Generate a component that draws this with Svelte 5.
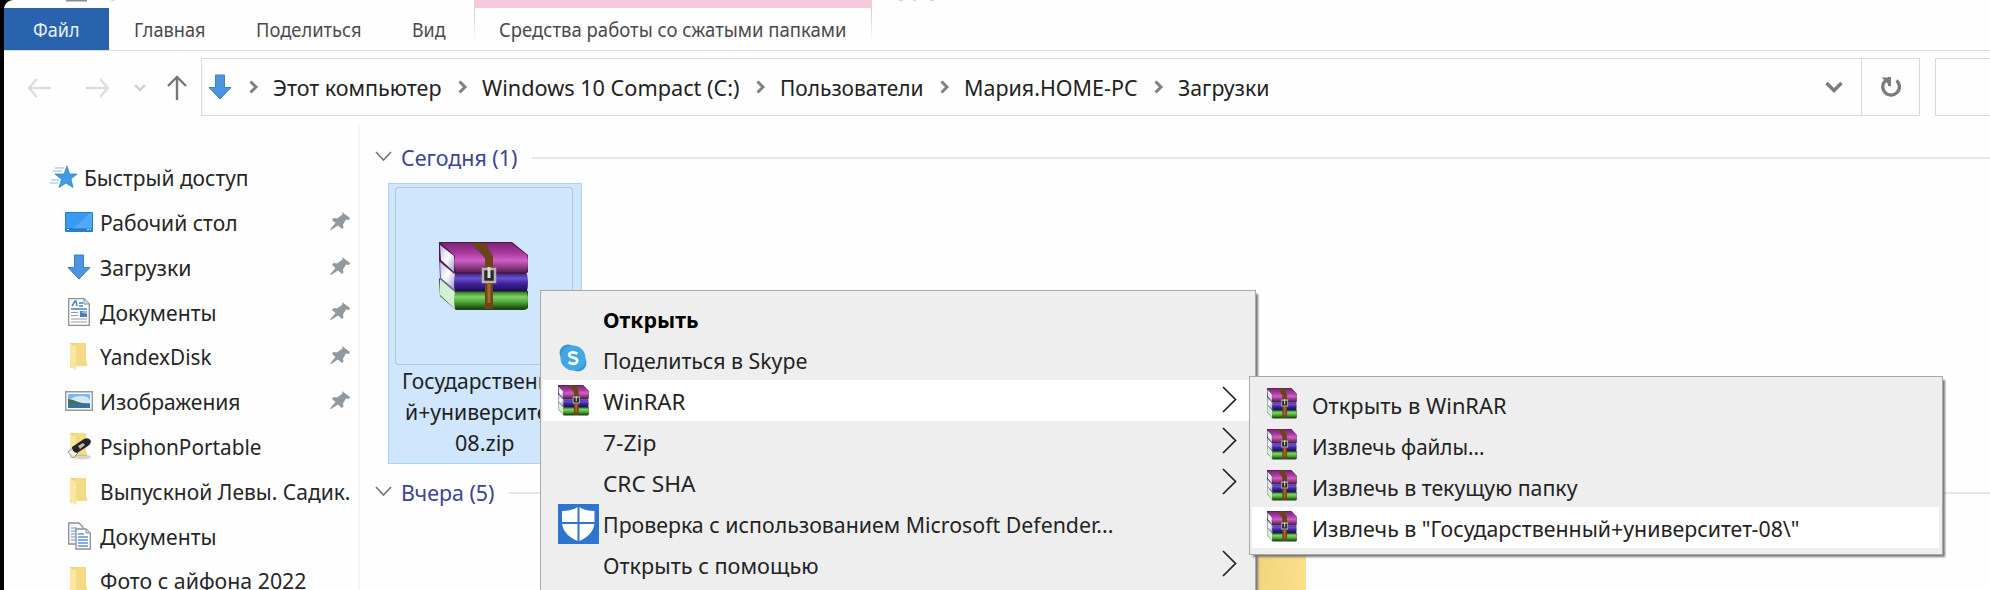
<script>
  const tabs = [
    { label: 'Главная', w: 70 },
    { label: 'Поделиться', w: 104 },
    { label: 'Вид', w: 32 }
  ];
  const crumbs = [
    { label: 'Этот компьютер', w: 167 },
    { label: 'Windows 10 Compact (C:)', w: 256 },
    { label: 'Пользователи', w: 142 },
    { label: 'Мария.HOME-PC', w: 172 },
    { label: 'Загрузки', w: 90 }
  ];
  const places = [
    { label: 'Рабочий стол', w: 136, icon: 'desktop', pin: true },
    { label: 'Загрузки', w: 90, icon: 'down', pin: true },
    { label: 'Документы', w: 115, icon: 'doc', pin: true },
    { label: 'YandexDisk', w: 110, icon: 'folder', pin: true },
    { label: 'Изображения', w: 139, icon: 'image', pin: true },
    { label: 'PsiphonPortable', w: 160, icon: 'usb' },
    { label: 'Выпускной Левы. Садик.', w: 249, icon: 'folder' },
    { label: 'Документы', w: 115, icon: 'docs' },
    { label: 'Фото с айфона 2022', w: 205, icon: 'folder' }
  ];
  const menu = [
    { label: 'Открыть', w: 94, bold: true },
    { label: 'Поделиться в Skype', w: 203, icon: 'skype' },
    { label: 'WinRAR', w: 81, icon: 'rar', sub: true, active: true },
    { label: '7-Zip', w: 52, sub: true },
    { label: 'CRC SHA', w: 91, sub: true },
    { label: 'Проверка с использованием Microsoft Defender...', w: 509, icon: 'defender' },
    { label: 'Открыть с помощью', w: 214, sub: true }
  ];
  const submenu = [
    { label: 'Открыть в WinRAR', w: 193 },
    { label: 'Извлечь файлы...', w: 171 },
    { label: 'Извлечь в текущую папку', w: 264 },
    { label: 'Извлечь в "Государственный+университет-08\\"', w: 486, active: true }
  ];

  // Squeezes a label horizontally so that it fills the given width.
  function fit(node, width) {
    const natural = node.getBoundingClientRect().width;
    if (natural) node.style.transform = `scaleX(${(width + 1.5) / natural})`;
  }
</script>

{#snippet label(text, w)}
  <span class="fit" style:width="{w}px"><span class="fit-in" use:fit={w}>{text}</span></span>
{/snippet}

{#snippet downArrow()}
  <svg width="24" height="26" viewBox="0 0 24 26"><path d="M7.5 1h9v12.5H23L12 25 1 13.500h6.500z" fill="#4a94e0" stroke="#3b7fc9" /></svg>
{/snippet}

{#snippet chevron()}
  <svg width="9" height="14" viewBox="0 0 9 14"><path d="M1.500 1.500 7 7l-5.500 5.500" fill="none" stroke="#808080" stroke-width="3" /></svg>
{/snippet}

{#snippet rar(w, h, strap)}
  <svg width={w} height={h} viewBox="0 0 90 69" preserveAspectRatio="none">
    <defs>
      <linearGradient id="mag" x2="0" y2="1"><stop offset="0" stop-color="#7d2474" /><stop offset=".35" stop-color="#a83a9f" /><stop offset=".6" stop-color="#cf5fc6" /><stop offset="1" stop-color="#5e2157" /></linearGradient>
      <linearGradient id="pur" x2="0" y2="1"><stop offset="0" stop-color="#3e2a9b" /><stop offset=".25" stop-color="#6a52cf" /><stop offset=".55" stop-color="#41259f" /><stop offset="1" stop-color="#1c0d55" /></linearGradient>
      <linearGradient id="grn" x2="0" y2="1"><stop offset="0" stop-color="#347d24" /><stop offset=".3" stop-color="#83d268" /><stop offset=".6" stop-color="#53ad3a" /><stop offset="1" stop-color="#1e4f16" /></linearGradient>
      <linearGradient id="pg" x2="1" y2="1"><stop offset="0" stop-color="#b9bde0" /><stop offset=".5" stop-color="#fff" /><stop offset="1" stop-color="#a9a0cf" /></linearGradient>
    </defs>
    <path d="M0 36 15 49H89v17q-2 2-4 2H17L1 54z" fill="#1f4717" />
    <path d="M1 37 16 50v17L1 53z" fill="#d5efd2" />
    <path d="M16 50H88q2 8 0 16H16q-2-8 0-16z" fill="url(#grn)" />
    <path d="M0 18 15 31l1 19L1 37z" fill="#6b609a" />
    <path d="M1 20 15 32v15L2 36z" fill="url(#pg)" />
    <path d="M16 32H88q2 8 0 17H16q-2-8 0-17z" fill="url(#pur)" />
    <path d="M0 0H73L89 13v17l-2 2H16L0 19z" fill="#4d194b" />
    <path d="M1 3 15 14v16L2 18z" fill="url(#pg)" />
    <path d="M2 1H72L88 13q2 8 0 17H17q-3-9-1-16z" fill="url(#mag)" />
    <path d="M32 1H{38 + strap}L{46 + strap} 14V67H46V16z" fill="#6f431a" />
    <path d="M{46 + strap * 0.3} 42h{strap * 0.4}v19h-{strap * 0.4}z" fill="#a56b2a" />
    <path d="M44 27H{48 + strap}V40H44z" fill="#2a2a2a" stroke="#b5b5ad" stroke-width="2.500" />
    <path d="M{46 + strap / 2} 25v11" stroke="#ddd" stroke-width="3" />
  </svg>
{/snippet}

{#snippet placeIcon(kind)}
  {#if kind === 'desktop'}
    <svg width="28" height="20" viewBox="0 0 28 20"><path d="M.5.500h27v19H.500z" fill="#399af3" stroke="#287bc9" /><path d="M8 17 25 1h2v16z" fill="#52a9f6" /><path d="M1 17.500h26" stroke="#2272bc" stroke-width="2" /><path d="M2 17.500h2m18 0h2m1 0h1" stroke="#d6ebff" /></svg>
  {:else if kind === 'down'}
    {@render downArrow()}
  {:else if kind === 'doc'}
    <svg width="22" height="28" viewBox="0 0 22 28"><path d="M.7.700h15.300L21.300 6v21.300H.700z" fill="#fff" stroke="#8b8f93" stroke-width="1.300" /><path d="M16 1v5h5" fill="#e5e5e5" stroke="#8b8f93" /><path d="m4 8 3-5h1l1 5M11 5h4M11 8h4M3 11h16" stroke="#3585cc" fill="none" stroke-width="1.500" /><path d="M12 13h7v6h-7z" fill="#447fb9" /><path d="m12 14 7-1v3z" fill="#9bc7e9" /><path d="M3 14.500h7m-7 3h7m-7 3.500h16m-16 3h16" stroke="#999" stroke-width="1.200" /></svg>
  {:else if kind === 'image'}
    <svg width="28" height="20" viewBox="0 0 28 20"><path d="M.7.700h26.600v18.600H.700z" fill="#f6f8fa" stroke="#8e9aa8" stroke-width="1.400" /><path d="M3 3h22v14H3z" fill="#80b8ee" /><path d="M5 8q8-5 17-2l3 3v3H3z" fill="#d4e8f5" /><path d="M3 8q4 0 9 2.500t13 2V14H3z" fill="#3c7059" /><path d="M3 13h22v4H3z" fill="#3c6fa6" /></svg>
  {:else if kind === 'docs'}
    <svg width="23" height="28" viewBox="0 0 23 28"><path d="M.7 1h10.300l4 4v17H.700z" fill="#f4f7fc" stroke="#8b8f96" stroke-width="1.300" /><path d="M3 6h6M3 9h8M3 12h8M3 15h8M3 18h8" stroke="#9bb8dc" stroke-width="1.300" /><path d="M8 7h10l4.300 4v16H8z" fill="#fff" stroke="#8b8f96" stroke-width="1.300" /><path d="M18 7v4h4" fill="#ddd" stroke="#8b8f96" /><path d="M10 12h6m-6 3h10m-10 3h10m-10 3h10m-10 3h10" stroke="#5b93dc" stroke-width="1.500" /></svg>
  {:else}
    <svg width="24" height="30" viewBox="0 0 24 30">
      <path d="M3 2h16v20h1v3H8L3 27z" fill="#edcb69" />
      <path d="M7 2h12v19l1 1v3H9z" fill="#f5da85" />
      <path d="m3 2 6 4v23l-6-3.500z" fill="#fae69d" />
      {#if kind === 'usb'}
        <ellipse cx="16" cy="26" rx="8" ry="2.500" fill="#8a8a7d" opacity=".35" />
        <path d="m1 21 5-4 5 5-5 5z" fill="#eceff0" stroke="#8f9396" />
        <path d="M5 16 17 8q5-2 7 2 0 3-3 5l-11 7q-5-1-5-6z" fill="#252525" />
        <path d="m11 15 5-3 2 2-5 4z" fill="#b9b9b9" />
      {/if}
    </svg>
  {/if}
{/snippet}

{#snippet groupHead(text, w)}
  <div class="group">
    <svg width="17" height="11" viewBox="0 0 17 11"><path d="m1 1 7.500 8L16 1" fill="none" stroke="#777" stroke-width="1.700" /></svg>
    {@render label(text, w)}
    <i></i>
  </div>
{/snippet}

<div class="screen">
  <div class="window">
    <div class="title">
      <svg width="980" height="8" viewBox="0 0 980 8"><path d="M62 .500h21" stroke="#8c8c8c" stroke-width="2" /><path d="M107 .500h3" stroke="#efd68a" /><path d="M895 0h4m10 0h3m14 0h4" stroke="#aaa" /></svg>
    </div>
    <div class="ribbon">
      <div class="file">{@render label('Файл', 45)}</div>
      {#each tabs as t}<div class="tab">{@render label(t.label, t.w)}</div>{/each}
      <div class="context-tab">{@render label('Средства работы со сжатыми папками', 346)}</div>
    </div>
    <div class="nav">
      <div class="nav-buttons">
        <svg width="25" height="20" viewBox="0 0 25 20"><path d="M10 1 2 10l8 9M2 10h22" fill="none" stroke="#ddd" stroke-width="2.400" /></svg>
        <svg width="25" height="20" viewBox="0 0 25 20"><path d="m15 1 8 9-8 9M23 10H1" fill="none" stroke="#ddd" stroke-width="2.400" /></svg>
        <svg width="12" height="8" viewBox="0 0 12 8"><path d="m1 1 5 5 5-5" fill="none" stroke="#d0d0d0" stroke-width="2.400" /></svg>
        <svg class="up" width="20" height="26" viewBox="0 0 20 26"><path d="m1 11 9-9 9 9M10 2v23" fill="none" stroke="#777" stroke-width="2.400" /></svg>
      </div>
      <div class="address">
        <div class="path">
          {@render downArrow()}
          {#each crumbs as c}
            {@render chevron()}
            {@render label(c.label, c.w)}
          {/each}
        </div>
        <svg class="drop" width="18" height="12" viewBox="0 0 18 12"><path d="m1.500 2 7.500 7.500L16.500 2" fill="none" stroke="#7b7b7b" stroke-width="3.500" /></svg>
        <div class="refresh">
          <svg width="22" height="22" viewBox="0 0 22 22"><path d="M16.500 4.500A8.300 8.300 0 1 1 6 4.200" fill="none" stroke="#7b7b7b" stroke-width="3.300" /><path d="M1.500 1.500h9.500v9.300z" fill="#7b7b7b" /><path d="M9.500 1v9" stroke="#7b7b7b" stroke-width="3" /></svg>
        </div>
      </div>
      <div class="search"></div>
    </div>
    <div class="body">
      <aside>
        <div class="place root">
          <svg width="27" height="22" viewBox="0 0 27 22"><path d="m17 0 2.500 8H27l-6 5 2 8.500-7-4.500-7 4.500 2.500-8L5 8h9z" fill="#409be6" stroke="#277bc5" stroke-width=".7" /><path d="M5 2h9M3 5h9M1 14h8M0 17h8" stroke="#88bde8" stroke-width="1.200" /></svg>
          {@render label('Быстрый доступ', 163)}
        </div>
        {#each places as p}
          <div class="place">
            <span class="picon">{@render placeIcon(p.icon)}</span>
            {@render label(p.label, p.w)}
            {#if p.pin}
              <svg class="pin" width="21" height="20" viewBox="0 0 21 20"><path d="m12 1 8 6-1 2-3-.5-3 5 .5 3-1.500 1.500-4-3.500L1 19l-1-.500 5.500-6.500L2 9l1.500-2 3.500.5 5.500-4z" fill="#8f999f" /></svg>
            {/if}
          </div>
        {/each}
      </aside>
      <main>
        {@render groupHead('Сегодня (1)', 115)}
        <div class="tile">
          <div class="thumb">{@render rar(90, 69, 8)}</div>
          <div class="name">
            {@render label('Государственны', 163)}
            {@render label('й+университет-', 158)}
            {@render label('08.zip', 58)}
          </div>
        </div>
        {@render groupHead('Вчера (5)', 92)}
        <div class="folder"></div>
      </main>
    </div>
  </div>

  <div class="menu main-menu">
    {#each menu as m}
      <div class="item" class:active={m.active} class:bold={m.bold}>
        <span class="micon">
          {#if m.icon === 'rar'}
            {@render rar(31, 31, 14)}
          {:else if m.icon === 'skype'}
            <svg class="skype" width="28" height="28" viewBox="0 0 28 28"><circle cx="9" cy="9" r="8.500" fill="#3598d5" /><circle cx="19" cy="19" r="8.500" fill="#3598d5" /><circle cx="14" cy="14" r="12.500" fill="#43a7e3" /><path d="M18.500 9.700q-4-2.200-7-.8-2.500 1.800-.4 3.700l5 1.700q3 1.300 1.800 3.800-2.600 3.200-8.300.2" fill="none" stroke="#fff" stroke-width="2.700" /></svg>
          {:else if m.icon === 'defender'}
            <svg width="41" height="40" viewBox="0 0 41 40"><path d="M0 0h41v40H0z" fill="#2d75cf" /><path d="M20.500 2.500q6 4.500 16 4.500v12q-1 12-16 18.500Q5 31 4 19V7q10 0 16.500-4.500z" fill="#fff" /><path d="M20.500 1v38M2 19h37" stroke="#2d75cf" stroke-width="2" /></svg>
          {/if}
        </span>
        {@render label(m.label, m.w)}
        {#if m.sub}
          <svg class="arrow" width="15" height="27" viewBox="0 0 15 27"><path d="M1 1 13.500 13.500 1 26" fill="none" stroke="#222" stroke-width="1.700" /></svg>
        {/if}
      </div>
    {/each}
  </div>

  <div class="menu sub-menu">
    {#each submenu as m}
      <div class="item" class:active={m.active}>
        <span class="micon">{@render rar(30, 31, 14)}</span>
        {@render label(m.label, m.w)}
      </div>
    {/each}
  </div>
</div>

<style>
  :global(body) { margin: 0; overflow: hidden; }
  .screen {
    position: relative;
    width: 1990px;
    height: 590px;
    overflow: hidden;
    background: #000;
    font: 22px/30px 'Noto Sans', sans-serif;
    color: #262626;
  }
  svg { display: block; flex: none; overflow: visible; }
  .fit { display: block; flex: none; white-space: nowrap; }
  .fit-in { display: inline-block; margin-left: -1.5px; transform-origin: 0 50%; }
  .window {
    height: 590px;
    margin-left: 4px;
    display: flex;
    flex-direction: column;
    background: #fefefe;
    border-top-left-radius: 9px;
    overflow: hidden;
  }
  .title { height: 8px; flex: none; }
  .ribbon {
    display: flex;
    align-items: stretch;
    height: 42px;
    flex: none;
    border-bottom: 1px solid #d9dadb;
    font-size: 19px;
    color: #4a4a4a;
  }
  .ribbon > div { display: flex; align-items: center; flex: none; box-sizing: border-box; padding-top: 1px; }
  .ribbon .file { width: 105px; justify-content: center; background: #2963ae; color: #e8f0fa; }
  .ribbon .tab { padding-left: 26px; padding-right: 26px; }
  .ribbon .tab:nth-child(4) { padding-right: 29px; }
  .ribbon .context-tab {
    width: 398px;
    margin-top: -8px;
    justify-content: center;
    border-top: 8px solid #f5c9de;
    background: linear-gradient(#d8c6cf, #fff 85%) left / 1px 100% no-repeat, linear-gradient(#d8c6cf, #fff 85%) right / 1px 100% no-repeat;
  }
  .nav { display: flex; height: 73px; flex: none; align-items: flex-start; padding-top: 7px; box-sizing: border-box; color: #222; }
  .nav-buttons { display: flex; flex: none; align-items: center; width: 197px; height: 60px; padding-left: 23px; box-sizing: border-box; }
  .nav-buttons svg + svg { margin-left: 33px; }
  .nav-buttons svg:nth-child(3) { margin-left: 24px; }
  .nav-buttons .up { margin-left: 21px; }
  .address { display: flex; flex: none; align-items: center; width: 1719px; height: 58px; border: 1px solid #d9d9d9; box-sizing: border-box; }
  .path { display: flex; align-items: center; gap: 16.600px; padding-left: 6px; flex: 1; }
  .drop { margin-right: 18px; }
  .refresh { width: 57px; height: 56px; border-left: 1px solid #d9d9d9; display: flex; align-items: center; justify-content: center; }
  .search { flex: none; width: 80px; height: 58px; margin-left: 15px; border: 1px solid #d9d9d9; box-sizing: border-box; }
  .body { display: flex; flex: 1; min-height: 0; }
  aside { width: 356px; flex: none; box-sizing: border-box; padding-top: 31px; border-right: 2px solid #f5f5f5; }
  .place { display: flex; align-items: center; height: 44.770px; padding-left: 61px; }
  .place.root { padding-left: 46px; gap: 8px; }
  .picon { display: flex; justify-content: center; width: 28px; margin-right: 8px; }
  .pin { margin: 0 7px 2px auto; }
  main { flex: 1; display: flex; flex-direction: column; padding-top: 19px; min-width: 0; overflow: hidden; }
  .group { display: flex; align-items: center; height: 30px; padding-left: 15px; color: #3b4494; flex: none; }
  .group .fit { margin-top: -2px; }
  .group svg { margin: -4px 10px 0 0; }
  .group i { flex: 1; height: 2px; margin: -1px 0 0 15px; background: #e6e6e6; }
  .tile {
    width: 194px;
    height: 281px;
    margin: 10px 0 14px 28px;
    box-sizing: border-box;
    border: 1px solid #a9d4f7;
    background: #cfe6fc;
    padding: 3px 6px 0;
    flex: none;
  }
  .thumb { width: 178px; height: 178px; box-sizing: border-box; border: 1px solid #b2c5da; border-radius: 3px; display: flex; align-items: center; justify-content: center; }
  .name { display: flex; flex-direction: column; align-items: center; line-height: 31px; color: #1f1f1f; }
  .folder { width: 58px; height: 90px; margin: 35px 0 0 888px; background: linear-gradient(100deg, #efd27a, #fbe28e); flex: none; }
  .menu {
    position: absolute;
    box-sizing: border-box;
    background: #eee;
    border: 1px solid #a8a8a8;
    box-shadow: 3px 3px 2px -1px #777;
    color: #232323;
  }
  .main-menu { left: 540px; top: 290px; width: 716px; height: 330px; padding: 7px 6px 0 2px; }
  .sub-menu { left: 1249px; top: 376px; width: 694px; height: 179px; padding: 7px 3px 0 2px; }
  .item { display: flex; align-items: center; height: 41.100px; }
  .item.active { background: #fff; }
  .item.bold { font-weight: 700; color: #000; }
  .micon { width: 41px; margin: 0 5px 0 15px; flex: none; }
  .sub-menu .micon { width: 46px; margin: 0 0 2px 15px; }
  .skype { margin: -4px 0 0 1px; }
  .arrow { margin: -3px 12px 0 auto; }
</style>
